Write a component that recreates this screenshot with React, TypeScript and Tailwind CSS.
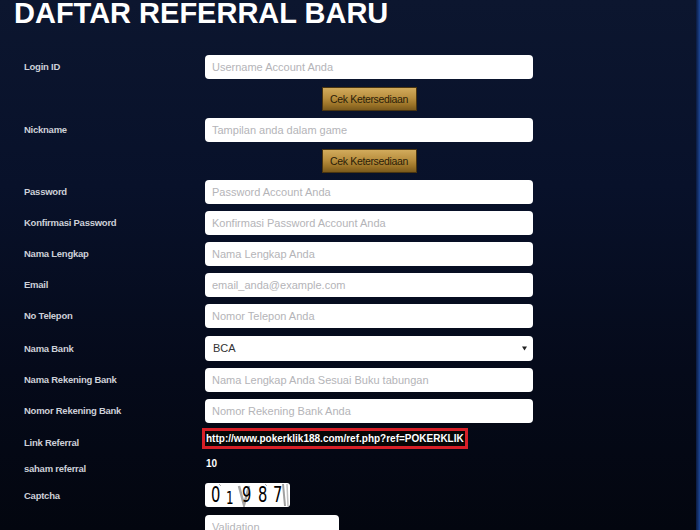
import React from "react";

const font = { fontFamily: '"Liberation Sans", Arial, sans-serif' };

function Label({ children, className = "" }: { children: React.ReactNode; className?: string }) {
  return (
    <div className={"w-[181px] shrink-0 text-[9.5px] leading-[12px] font-bold text-[#cdd0d8] tracking-[-0.25px] " + className}>
      {children}
    </div>
  );
}

function Field({ label, placeholder, className = "", type = "text" }: { label: string; placeholder: string; className?: string; type?: string }) {
  return (
    <div className={"flex items-center " + className}>
      <Label>{label}</Label>
      <input
        type={type}
        placeholder={placeholder}
        className="w-[328px] h-[24px] rounded-[4px] bg-white border-0 outline-none pl-[7px] text-[11px] text-[#333] placeholder:text-[#b4b4b8]"
        style={font}
      />
    </div>
  );
}

function CekButton({ className = "" }: { className?: string }) {
  return (
    <div className={"flex " + className}>
      <div className="w-[181px] shrink-0" />
      <div className="w-[328px] flex justify-center">
        <button
          className="w-[95px] h-[24px] border border-[#4a3510] bg-[linear-gradient(180deg,#d2ab5c_0%,#b98f3f_45%,#9c7428_75%,#7b5a1c_100%)] text-[10.5px] tracking-[-0.35px] text-[#2a1d08] leading-none"
          style={font}
        >
          Cek Ketersediaan
        </button>
      </div>
    </div>
  );
}

function Captcha() {
  const digits = [
    { d: "0", x: 6, s: "text-[21px]" },
    { d: "1", x: 21, s: "text-[17px] mt-[3px]" },
    { d: "9", x: 37, s: "text-[21px]" },
    { d: "8", x: 53, s: "text-[21px]" },
    { d: "7", x: 68, s: "text-[21px]" },
  ];
  return (
    <div className="relative w-[85px] h-[24px] rounded-[3px] bg-white overflow-hidden">
      <svg className="absolute inset-0" width="85" height="24" viewBox="0 0 85 24">
        <path d="M34 3 L39 22 L44 3" stroke="#a8a8a8" strokeWidth="2.5" fill="none" />
        <path d="M78 1 L80 23" stroke="#a0a0a0" strokeWidth="2" fill="none" />
        <path d="M82 1 L83 23" stroke="#c0c0c0" strokeWidth="1.5" fill="none" />
        <path d="M14 1 L16 3" stroke="#b0b0b0" strokeWidth="1" fill="none" />
        <path d="M60 1 L62 3" stroke="#b0b0b0" strokeWidth="1" fill="none" />
      </svg>
      {digits.map((g) => (
        <span
          key={g.d + g.x}
          className={"absolute top-0 leading-[24px] text-black origin-left scale-x-[0.7] " + g.s}
          style={{ left: g.x, fontFamily: '"DejaVu Sans", sans-serif' }}
        >
          {g.d}
        </span>
      ))}
    </div>
  );
}

export default function App() {
  return (
    <div
      className="relative w-[700px] h-[530px] overflow-hidden bg-[linear-gradient(180deg,#0c162f_0%,#08112a_35%,#050a1a_70%,#03060f_100%)]"
      style={font}
    >
      <div className="absolute right-0 top-0 w-[4px] h-full bg-[linear-gradient(90deg,#0a1a40,#1d4797)]" />
      <h1 className="ml-[14px] mt-[-2px] text-[29px] leading-[30px] font-bold text-white">DAFTAR REFERRAL BARU</h1>
      <div className="pl-[24px] flex flex-col">
        <Field label="Login ID" placeholder="Username Account Anda" className="mt-[27px]" />
        <CekButton className="mt-[8px]" />
        <Field label="Nickname" placeholder="Tampilan anda dalam game" className="mt-[7px]" />
        <CekButton className="mt-[7px]" />
        <Field label="Password" placeholder="Password Account Anda" type="password" className="mt-[7px]" />
        <Field label="Konfirmasi Password" placeholder="Konfirmasi Password Account Anda" type="password" className="mt-[7px]" />
        <Field label="Nama Lengkap" placeholder="Nama Lengkap Anda" className="mt-[7px]" />
        <Field label="Email" placeholder="email_anda@example.com" className="mt-[7px]" />
        <Field label="No Telepon" placeholder="Nomor Telepon Anda" className="mt-[7px]" />
        <div className="flex items-center mt-[8px]">
          <Label>Nama Bank</Label>
          <div className="relative w-[328px] h-[25px] rounded-[4px] bg-white flex items-center pl-[8px] text-[11px] text-[#333]">
            BCA
            <svg className="absolute right-[6px] top-[10px]" width="5" height="5" viewBox="0 0 5 5">
              <path d="M0 0.5 H5 L2.5 4.5 Z" fill="#222" />
            </svg>
          </div>
        </div>
        <Field label="Nama Rekening Bank" placeholder="Nama Lengkap Anda Sesuai Buku tabungan" className="mt-[7px]" />
        <Field label="Nomor Rekening Bank" placeholder="Nomor Rekening Bank Anda" className="mt-[7px]" />
        <div className="flex items-start mt-[5px]">
          <Label className="mt-[9px]">Link Referral</Label>
          <div className="ml-[-3px] h-[21px] border-[3px] border-[#d71f27] bg-[#060606] pl-[1px] pr-[1px] flex items-center">
            <span className="text-[10px] leading-[12px] font-bold text-white">http://www.pokerklik188.com/ref.php?ref=POKERKLIK</span>
          </div>
        </div>
        <div className="flex items-start mt-[9px]">
          <Label className="mt-[5px]">saham referral</Label>
          <div className="text-[10px] leading-[12px] font-bold text-white ml-[1px]">10</div>
        </div>
        <div className="flex items-start mt-[8px]">
          <Label className="mt-[7px]">Captcha</Label>
          <Captcha />
        </div>
        <div className="flex mt-[8px]">
          <div className="w-[181px] shrink-0" />
          <input
            placeholder="Validation"
            className="w-[134px] h-[24px] rounded-[4px] bg-white border-0 outline-none pl-[7px] text-[11px] placeholder:text-[#b4b4b8]"
            style={font}
          />
        </div>
      </div>
    </div>
  );
}
